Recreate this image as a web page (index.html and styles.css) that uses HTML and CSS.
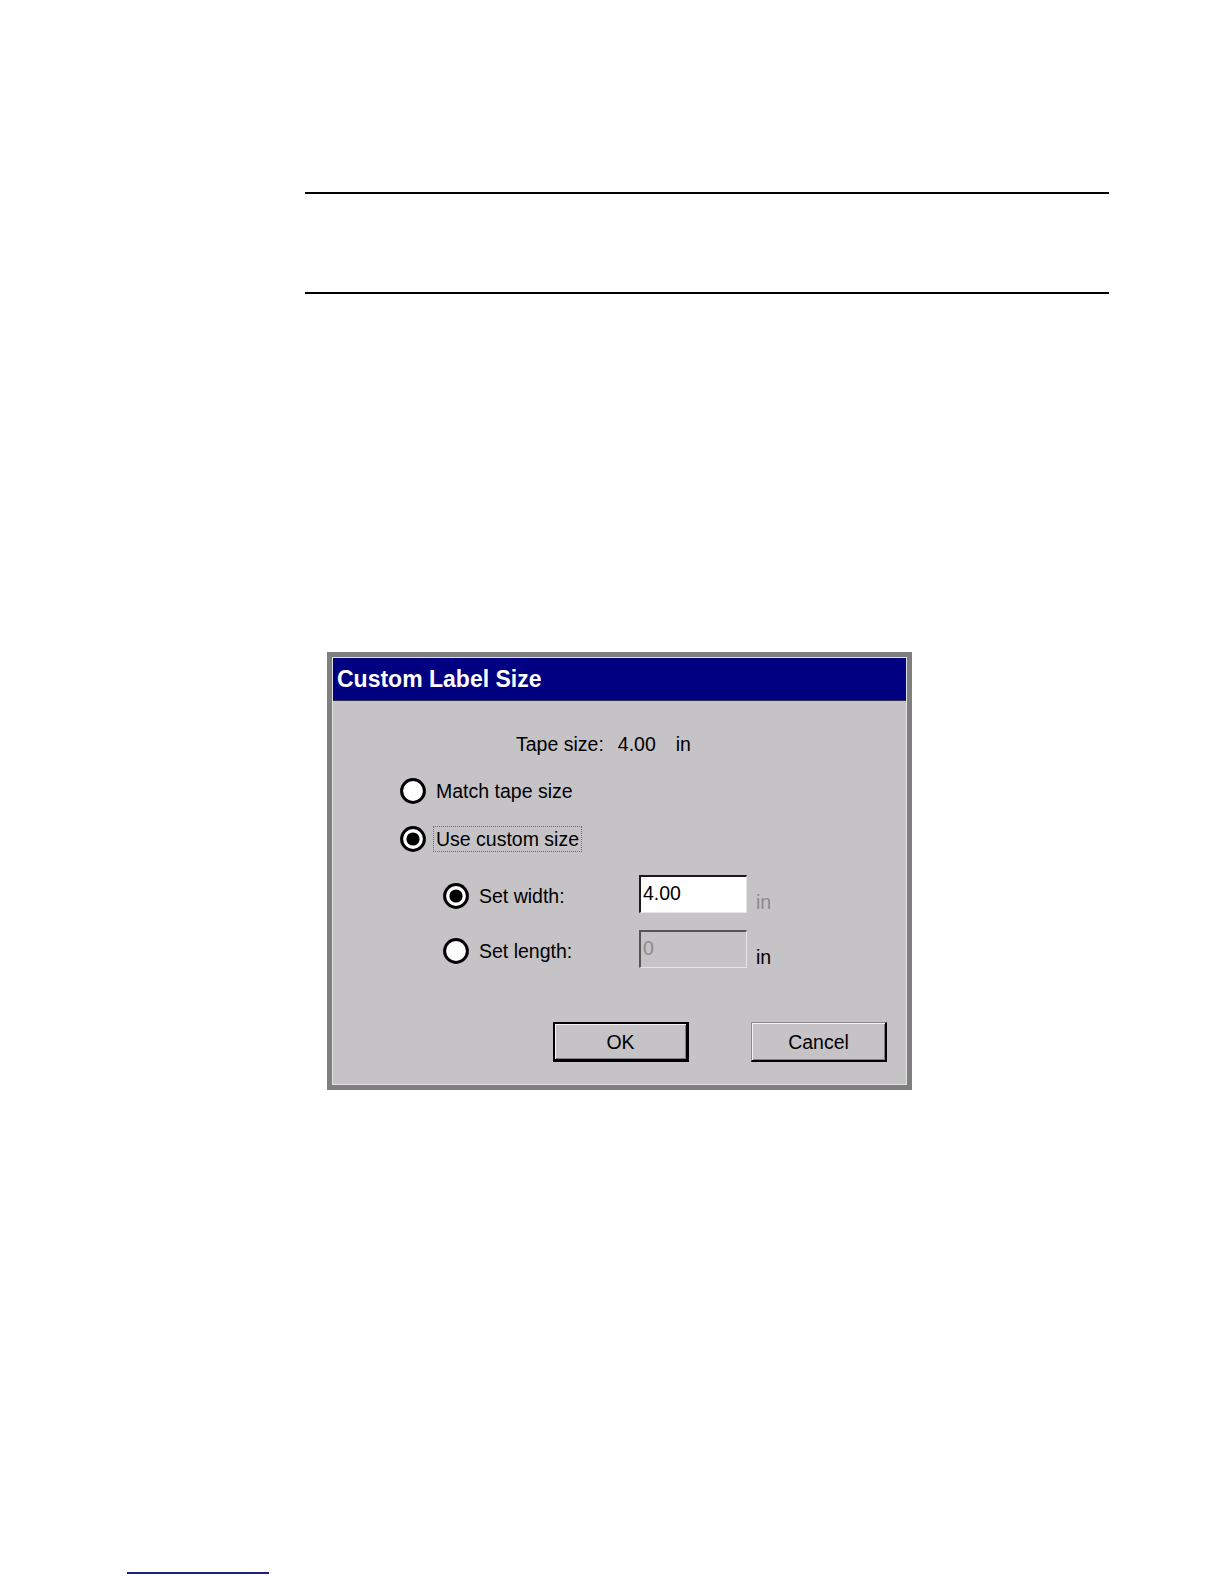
FILE: index.html
```html
<!DOCTYPE html>
<html lang="en">
<head>
<meta charset="utf-8">
<title>Custom Label Size</title>
<link rel="stylesheet" href="styles.css">
</head>
<body>
<div class="page">
  <div class="rule-block"></div>

  <div class="dialog">
    <div class="dialog-inner">
      <div class="titlebar">Custom Label Size</div>
      <div class="dialog-body">
        <div class="tape-row">
          <span>Tape size:</span><span class="tape-val">4.00</span><span class="tape-unit">in</span>
        </div>

        <div class="radio-row">
          <svg class="radio" viewBox="0 0 26 26" width="26" height="26"><circle cx="13" cy="13" r="11.4" fill="#fff" stroke="#000" stroke-width="3"/></svg>
          <span class="label">Match tape size</span>
        </div>
        <div class="radio-row second">
          <svg class="radio" viewBox="0 0 26 26" width="26" height="26"><circle cx="13" cy="13" r="11.4" fill="#fff" stroke="#000" stroke-width="3"/><circle cx="13" cy="13" r="6.6" fill="#000"/></svg>
          <span class="label focused">Use custom size</span>
        </div>

        <div class="size-grid">
          <div class="size-row">
            <div class="radio-group">
              <svg class="radio" viewBox="0 0 26 26" width="26" height="26"><circle cx="13" cy="13" r="11.4" fill="#fff" stroke="#000" stroke-width="3"/><circle cx="13" cy="13" r="6.6" fill="#000"/></svg>
              <span class="label">Set width:</span>
            </div>
            <div class="field">4.00</div>
            <span class="unit disabled">in</span>
          </div>
          <div class="size-row">
            <div class="radio-group">
              <svg class="radio" viewBox="0 0 26 26" width="26" height="26"><circle cx="13" cy="13" r="11.4" fill="#fff" stroke="#000" stroke-width="3"/></svg>
              <span class="label">Set length:</span>
            </div>
            <div class="field field-disabled">0</div>
            <span class="unit">in</span>
          </div>
        </div>

        <div class="button-row">
          <div class="btn btn-default">OK</div>
          <div class="btn">Cancel</div>
        </div>
      </div>
    </div>
  </div>

  <div class="footer-line"></div>
</div>
</body>
</html>
```

FILE: styles.css
```css
html, body {
  margin: 0;
  padding: 0;
  background: #ffffff;
}

.page {
  padding-top: 192px;
  font-family: "Liberation Sans", Arial, sans-serif;
}

.rule-block {
  margin-left: 305px;
  width: 804px;
  height: 98px;
  border-top: 2px solid #000;
  border-bottom: 2px solid #000;
}

.dialog {
  margin-top: 358px;
  margin-left: 327px;
  width: 575px;
  border: 5px solid #7f7f7f;
  background: #c6c3c6;
}

.dialog-inner {
  border: 1px solid #e2e2e2;
}

.titlebar {
  height: 43px;
  line-height: 41px;
  padding: 1px 0 0 4px;
  box-sizing: border-box;
  background: #000080;
  border-bottom: 1px solid #30304a;
  color: #ffffff;
  font-weight: bold;
  font-size: 23px;
}

.dialog-body {
  padding: 32px 19px 22px 0;
  font-size: 19.5px;
  line-height: 22px;
  color: #000;
}

.tape-row {
  margin-left: 183px;
  display: flex;
}

.tape-val {
  margin-left: 14px;
}

.tape-unit {
  margin-left: 20px;
}

.radio-row {
  margin-left: 67px;
  margin-top: 23px;
  display: flex;
  align-items: center;
  height: 26px;
}

.radio-row.second {
  margin-top: 22px;
}

.radio {
  display: block;
  flex: none;
}

.label {
  margin-left: 7px;
  padding: 1px 2px;
  border: 1px dotted transparent;
  white-space: nowrap;
}

.label.focused {
  border-color: #b03cb0;
}

.size-grid {
  margin-top: 23px;
  margin-left: 110px;
  display: flex;
  flex-direction: column;
  gap: 17px;
}

.size-row {
  display: flex;
  align-items: flex-start;
  height: 38px;
}

.radio-group {
  width: 196px;
  margin-top: 8px;
  display: flex;
  align-items: center;
}

.field {
  width: 108px;
  height: 38px;
  box-sizing: border-box;
  border-top: 2px solid #1a1a1a;
  border-left: 2px solid #1a1a1a;
  border-right: 1px solid #e6e6e6;
  border-bottom: 1px solid #e6e6e6;
  background: #ffffff;
  padding: 5px 0 0 2px;
  color: #000;
}

.field-disabled {
  background: #c6c3c6;
  color: #8c8c8c;
  border-top-color: #555;
  border-left-color: #555;
}

.unit {
  margin-left: 9px;
  margin-top: 16px;
  color: #000;
}

.unit.disabled {
  color: #8c8a8c;
}

.button-row {
  margin-top: 54px;
  display: flex;
  justify-content: flex-end;
  gap: 62px;
}

.btn {
  width: 136px;
  height: 40px;
  box-sizing: border-box;
  border-top: 1px solid #8a8a8a;
  border-left: 1px solid #8a8a8a;
  border-right: 2px solid #000;
  border-bottom: 2px solid #000;
  box-shadow: inset 1px 1px 0 #f4f4f4, inset -1px -1px 0 #808080;
  display: flex;
  align-items: center;
  justify-content: center;
  color: #000;
  font-size: 19.5px;
}

.btn-default {
  border: 2px solid #000;
  border-right-width: 3px;
  border-bottom-width: 3px;
}

.footer-line {
  margin-top: 482px;
  margin-left: 127px;
  width: 142px;
  height: 2px;
  background: #1f1f86;
}
```
